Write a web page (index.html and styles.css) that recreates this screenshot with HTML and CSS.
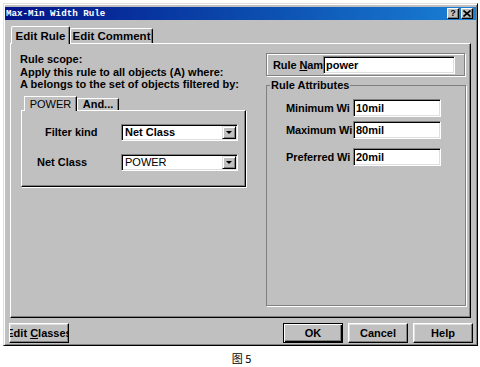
FILE: index.html
```html
<!DOCTYPE html>
<html>
<head>
<meta charset="utf-8">
<title>Max-Min Width Rule</title>
<link rel="stylesheet" href="styles.css">
</head>
<body>
<div class="dialog">
  <div class="titlebar">
    <span class="title">Max-Min Width Rule</span>
    <div class="tb-btns">
      <span class="tbb">?</span>
      <span class="tbb"><svg width="8" height="7" viewBox="0 0 8 7"><path d="M0.5 0.5 L7.5 6.5 M7.5 0.5 L0.5 6.5" stroke="#000" stroke-width="1.6"/></svg></span>
    </div>
  </div>
  <div class="tabs">
    <div class="tab active t1">Edit Rule</div>
    <div class="tab t2">Edit Comment</div>
  </div>
  <div class="panel">
    <div class="left">
      <p class="scope">Rule scope:<br>Apply this rule to all objects (A) where:<br>A belongs to the set of objects filtered by:</p>
      <div class="itabs">
        <div class="itab active i1">POWER</div>
        <div class="itab i2">And...</div>
      </div>
      <div class="ipanel">
        <div class="row r1">
          <span class="lbl">Filter kind</span>
          <div class="select"><span class="val">Net Class</span><span class="arrow"></span></div>
        </div>
        <div class="row r2">
          <span class="lbl">Net Class</span>
          <div class="select"><span class="val plain">POWER</span><span class="arrow"></span></div>
        </div>
      </div>
    </div>
    <div class="right">
      <div class="namebox">
        <span class="nlabel">Rule <u>N</u>am</span>
        <div class="input name">power</div>
      </div>
      <fieldset class="attrs">
        <legend>Rule Attributes</legend>
        <div class="arow a1"><span class="alabel">Minimum Wi</span><div class="input num">10mil</div></div>
        <div class="arow a2"><span class="alabel">Maximum Wi</span><div class="input num">80mil</div></div>
        <div class="arow a3"><span class="alabel">Preferred Wi</span><div class="input num">20mil</div></div>
      </fieldset>
    </div>
  </div>
  <div class="buttons">
    <div class="btn"><span class="btxt">Edit <u>C</u>lasses</span></div>
    <div class="btn-group">
      <div class="btn default">OK</div>
      <div class="btn">Cancel</div>
      <div class="btn">Help</div>
    </div>
  </div>
</div>
<div class="caption">图 5</div>
</body>
</html>
```
FILE: styles.css
```css
* { box-sizing: border-box; }

body {
  margin: 0;
  padding: 3px 0 0 3px;
  background: #fff;
  font: bold 11px "Liberation Sans", Arial, sans-serif;
  color: #000;
}

.dialog {
  width: 475px;
  height: 343px;
  background: #c0c0c0;
  border: 1px solid;
  border-color: #dfdfdf #000 #000 #dfdfdf;
  box-shadow: inset 1px 1px #fff, inset -1px -1px #808080;
  padding: 3px 1px 0 1px;
  display: flex;
  flex-direction: column;
}

.titlebar {
  height: 13px;
  display: flex;
  align-items: center;
  justify-content: space-between;
  padding: 0 3px 0 1px;
  background: linear-gradient(90deg, #03138a 0%, #0c4fb0 55%, #1a80d6 100%);
}

.title {
  color: #fff;
  font: bold 9.2px "Liberation Mono", "DejaVu Sans Mono", monospace;
  line-height: 1;
}

.tb-btns { display: flex; gap: 2px; }

.tbb {
  width: 12px;
  height: 11px;
  background: #c0c0c0;
  border: 1px solid;
  border-color: #fff #000 #000 #fff;
  box-shadow: inset -1px -1px #808080;
  display: flex;
  align-items: center;
  justify-content: center;
  font: bold 9px "Liberation Sans", Arial, sans-serif;
  line-height: 1;
}

.tabs {
  display: flex;
  margin-top: 6px;
  padding-left: 6px;
  height: 17px;
  align-items: flex-start;
}

.tab {
  height: 15px;
  margin-top: 2px;
  border: 1px solid;
  border-color: #fff #000 transparent #fff;
  border-bottom: none;
  border-radius: 2px 2px 0 0;
  box-shadow: inset -1px 0 #808080;
  display: flex;
  align-items: center;
  justify-content: center;
  font-size: 11.5px;
  white-space: nowrap;
}

.tab.active {
  height: 18px;
  margin-top: 0;
  background: #c0c0c0;
  position: relative;
  z-index: 1;
}

.t1 { width: 59px; }
.t2 { width: 83px; }

.panel {
  height: 275px;
  margin: 0 5px;
  border: 1px solid;
  border-color: #fff #000 #000 #fff;
  box-shadow: inset -1px -1px #808080;
  padding: 9px 3px 0 9px;
  display: grid;
  grid-template-columns: 226px 200px;
  column-gap: 20px;
  align-items: start;
}

.scope {
  margin: 0;
  line-height: 12.5px;
}

.itabs {
  display: flex;
  margin-top: 5px;
  padding-left: 4px;
  height: 14px;
  align-items: flex-start;
}

.itab {
  height: 12px;
  margin-top: 2px;
  border: 1px solid;
  border-color: #fff #000 transparent #fff;
  border-bottom: none;
  box-shadow: inset -1px 0 #808080;
  display: flex;
  align-items: center;
  justify-content: center;
  white-space: nowrap;
}

.itab.active {
  height: 15px;
  margin-top: 0;
  background: #c0c0c0;
  position: relative;
  z-index: 1;
  font-weight: normal;
}

.i1 { width: 53px; }
.i2 { width: 42px; }

.ipanel {
  margin-left: 1px;
  width: 225px;
  height: 77px;
  border: 1px solid;
  border-color: #fff #000 #000 #fff;
  box-shadow: inset -1px -1px #808080, 1px 1px 0 #fff;
  padding-top: 13px;
}

.row {
  display: flex;
  align-items: center;
  height: 17px;
}

.row + .row { margin-top: 13px; }

.lbl { width: 99px; white-space: nowrap; }
.r1 .lbl { padding-left: 23px; }
.r2 .lbl { padding-left: 15px; }

.select {
  width: 117px;
  height: 17px;
  background: #fff;
  border: 1px solid;
  border-color: #808080 #fff #fff #808080;
  box-shadow: inset 1px 1px #000, inset -1px -1px #dfdfdf;
  display: flex;
  align-items: center;
  padding: 1px 1px 1px 2px;
}

.val { flex: 1; padding-left: 1px; white-space: nowrap; }
.val.plain { font-weight: normal; }

.arrow {
  width: 14px;
  height: 13px;
  background: #c0c0c0;
  border: 1px solid;
  border-color: #dfdfdf #000 #000 #dfdfdf;
  box-shadow: inset 1px 1px #fff, inset -1px -1px #808080;
  display: flex;
  align-items: center;
  justify-content: center;
}

.arrow::after {
  content: "";
  border-left: 3px solid transparent;
  border-right: 3px solid transparent;
  border-top: 3px solid #000;
  margin-top: 1px;
}

.namebox {
  height: 23px;
  width: 199px;
  border: 1px solid #808080;
  box-shadow: 1px 1px 0 #fff, inset 1px 1px 0 #fff;
  display: flex;
  align-items: center;
  padding-left: 6px;
}

.nlabel {
  width: 50px;
  white-space: nowrap;
  letter-spacing: -0.1px;
}

.input {
  height: 18px;
  background: #fff;
  border: 1px solid;
  border-color: #808080 #fff #fff #808080;
  box-shadow: inset 1px 1px #000, inset -1px -1px #dfdfdf;
  padding: 0 2px;
  display: flex;
  align-items: center;
  white-space: nowrap;
}

.input.name { width: 132px; }
.input.num { width: 88px; }

.attrs {
  margin: 3px 0 0 0;
  width: 200px;
  height: 227px;
  border: 1px solid #808080;
  box-shadow: 1px 1px 0 #fff;
  padding: 8px 0 0 19px;
  min-width: 0;
}

.attrs legend {
  padding: 0 1px;
  margin-left: -16px;
  line-height: 12px;
  background: #c0c0c0;
}

.arow {
  display: flex;
  align-items: center;
  height: 18px;
}

.a2 { margin-top: 4px; }
.a3 { margin-top: 9px; }

.alabel {
  width: 67px;
  white-space: nowrap;
  letter-spacing: -0.1px;
}

.buttons {
  display: flex;
  justify-content: space-between;
  margin-top: 5px;
  padding: 0 3px 0 4px;
}

.btn-group { display: flex; gap: 5px; }

.btn {
  width: 60px;
  height: 20px;
  background: #c0c0c0;
  border: 1px solid;
  border-color: #fff #000 #000 #fff;
  box-shadow: inset -1px -1px #808080, inset 1px 1px #dfdfdf;
  display: flex;
  align-items: center;
  justify-content: center;
  overflow: hidden;
  white-space: nowrap;
}

.btxt { flex: none; }

.btn.default {
  border-color: #000;
  box-shadow: inset 1px 1px #fff, inset -1px -1px #000, inset -2px -2px #808080;
}

.caption {
  margin-top: 6px;
  text-align: center;
  font: normal 11px "Noto Sans CJK SC", "Liberation Sans", sans-serif;
  line-height: 12px;
}
```
